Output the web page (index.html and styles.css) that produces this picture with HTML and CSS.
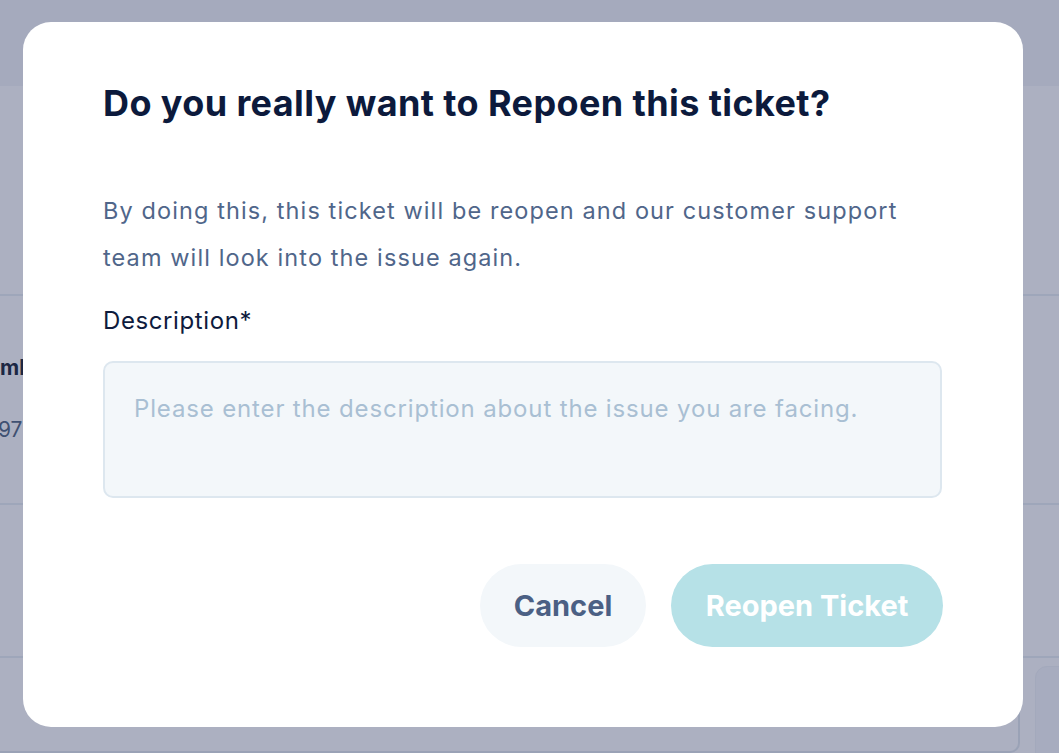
FILE: index.html
```html
<!DOCTYPE html>
<html lang="en">
<head>
<meta charset="utf-8">
<title>Reopen ticket</title>
<link rel="stylesheet" href="styles.css">
</head>
<body>
<div class="page">
  <div class="page-header"></div>
  <div class="page-body">
    <div class="row row-first"></div>
    <div class="row row-info">
      <div class="cell-name">ml</div>
      <div class="cell-value">97</div>
    </div>
    <div class="row row-gap"></div>
    <div class="page-card">
      <div class="side-box"></div>
    </div>
  </div>
</div>

<div class="overlay">
  <div class="modal">
    <h1 class="modal-title">Do you really want to Repoen this ticket?</h1>
    <p class="modal-text">By doing this, this ticket will be reopen and our customer support team will look into the issue again.</p>
    <label class="field-label" for="desc">Description*</label>
    <textarea id="desc" class="field-input" placeholder="Please enter the description about the issue you are facing."></textarea>
    <div class="actions">
      <button class="btn btn-cancel" type="button">Cancel</button>
      <button class="btn btn-primary" type="button">Reopen Ticket</button>
    </div>
  </div>
</div>
</body>
</html>
```

FILE: styles.css
```css
* { box-sizing: border-box; }

html, body {
  margin: 0;
  padding: 0;
  width: 1059px;
  height: 753px;
  overflow: hidden;
}

body {
  background: #acb0c1;
  font-family: "Inter", "Liberation Sans", sans-serif;
  position: relative;
}

/* underlying (dimmed) page */
.page {
  width: 1059px;
  height: 753px;
  display: flex;
  flex-direction: column;
}

.page-header {
  height: 86px;
  background: #a5aabd;
  flex: none;
}

.page-body {
  flex: 1;
  display: flex;
  flex-direction: column;
}

.row {
  border-bottom: 2px solid #9ea6ba;
  flex: none;
}

.row-first { height: 210px; }

.row-info {
  height: 209px;
  position: relative;
  color: #1c2744;
}

.cell-name {
  position: absolute;
  left: 0;
  top: 59px;
  font-weight: 700;
  font-size: 21px;
}

.cell-value {
  position: absolute;
  left: -2px;
  top: 121px;
  font-size: 21px;
  color: #3f5072;
}

.row-gap { height: 153px; }

.page-card {
  flex: 1;
  position: relative;
  border-bottom: 2px solid #9aa2b6;
  border-right: 2px solid #9aa2b6;
  border-bottom-right-radius: 10px;
  margin-right: 39px;
}

.side-box {
  position: absolute;
  left: 1035px;
  top: 8px;
  width: 60px;
  height: 120px;
  border-radius: 12px;
  background: #a7acbf;
  border: 1px solid #a3a9bc;
}

/* modal */
.overlay {
  position: absolute;
  inset: 0;
  display: flex;
  align-items: flex-start;
  padding: 22px 0 0 23px;
}

.modal {
  width: 1000px;
  height: 705px;
  background: #ffffff;
  border-radius: 28px;
  padding: 57px 80px 80px 80px;
  display: flex;
  flex-direction: column;
}

.modal-title {
  margin: 0;
  font-size: 36px;
  line-height: 48px;
  font-weight: 700;
  color: #0c1a3c;
  letter-spacing: 0.4px;
}

.modal-text {
  margin: 60px 0 0 0;
  font-size: 23.5px;
  line-height: 47px;
  letter-spacing: 1.1px;
  color: #50668a;
  max-width: 810px;
}

.field-label {
  margin-top: 26px;
  font-size: 24px;
  line-height: 28px;
  letter-spacing: 0.6px;
  color: #0e1b3d;
}

.field-input {
  margin-top: 26px;
  width: 839px;
  height: 137px;
  border: 2px solid #dde7ef;
  background: #f3f7fa;
  border-radius: 10px;
  padding: 32px 29px;
  font-family: inherit;
  font-size: 24px;
  line-height: 28px;
  letter-spacing: 0.85px;
  color: #0e1b3d;
  resize: none;
  outline: none;
}

.field-input::placeholder {
  color: #a9bfd3;
  opacity: 1;
}

.actions {
  margin-top: auto;
  display: flex;
  justify-content: flex-end;
  gap: 25px;
  width: 840px;
}

.btn {
  height: 83px;
  border: none;
  border-radius: 42px;
  font-family: inherit;
  font-size: 29px;
  font-weight: 700;
  padding: 0;
  cursor: pointer;
}

.btn-cancel {
  width: 166px;
  background: #f3f7fa;
  color: #4b6084;
}

.btn-primary {
  width: 272px;
  background: #b6e1e7;
  color: #ffffff;
}
```
